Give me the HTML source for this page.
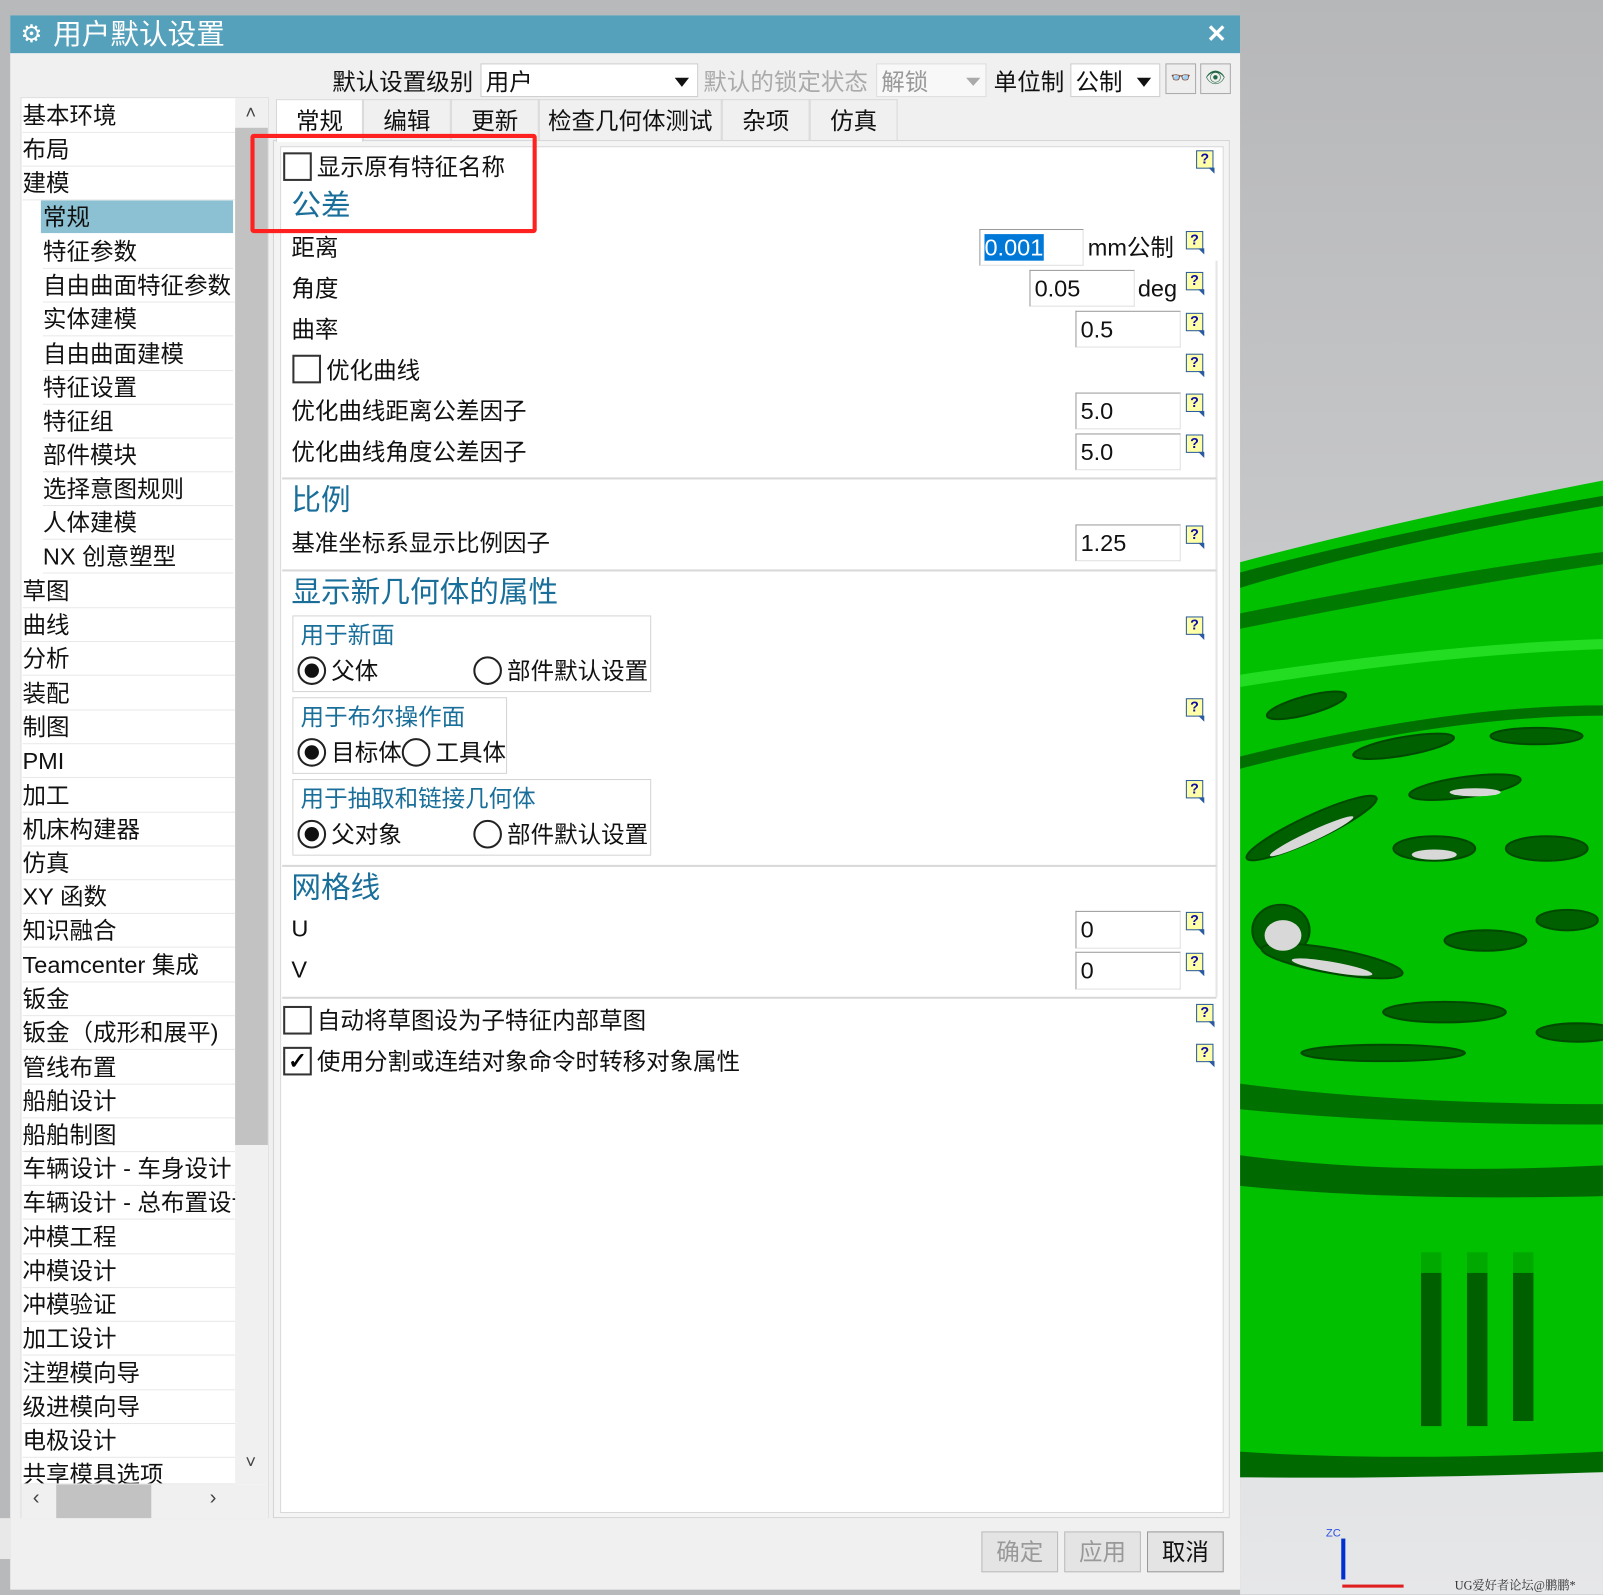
<!DOCTYPE html>
<html><head><meta charset="utf-8">
<style>
*{margin:0;padding:0;box-sizing:border-box}
body{width:1603px;height:1595px;overflow:hidden;background:#b8b9bb;font-family:"Liberation Sans","Noto Sans CJK SC",sans-serif;}
#w{position:absolute;left:0;top:0;width:1568px;height:1560px;transform:scale(1.0223);transform-origin:0 0;}
.a{position:absolute;white-space:nowrap}
.t{font-size:23px;color:#111;line-height:30px}
.b{color:#1a6f9a}
.inp{position:absolute;background:#fff;border:1px solid #9a9a9a;border-right-color:#e0e0e0;border-bottom-color:#e0e0e0;font-size:23px;line-height:34px;padding-left:4px;color:#111}
.cb{position:absolute;width:28px;height:28px;border:2px solid #333;background:#fff}
.rd{position:absolute;width:28px;height:28px;border:2px solid #222;border-radius:50%;background:#fff}
.rd.on::after{content:"";position:absolute;left:5px;top:5px;width:14px;height:14px;border-radius:50%;background:#111}
.h{position:absolute;width:17px;height:18px;background:#ffffa8;border:1.5px solid #2a5aa0;font:bold 14px/15px "Liberation Sans",sans-serif;color:#1010a0;text-align:center}
.h::after{content:"";position:absolute;right:-2px;bottom:-6px;border-left:6px solid transparent;border-top:6px solid #2a5aa0}
.li{position:absolute;left:22px;font-size:23px;line-height:32px;color:#111;border-bottom:1px solid #e8e8e8;width:208px;white-space:nowrap;overflow:hidden}
.sep{position:absolute;left:276px;width:914px;height:2px;background:#d8d8d8}
.grp{position:absolute;border:1px solid #d4d4d4}
.tab{position:absolute;top:97px;height:40px;background:#f0f0f0;border:1px solid #d8d8d8;border-bottom:none;font-size:23px;line-height:40px;text-align:center;color:#111}
.btn{position:absolute;top:1498px;width:75px;height:40px;border:1px solid #bbb;background:#e4e4e4;font-size:23px;line-height:38px;text-align:center;color:#999}
</style></head><body><div id="w">
<svg class="a" style="left:1213px;top:0" width="355" height="1560">
<defs><linearGradient id="bg" x1="0" y1="0" x2="0" y2="1"><stop offset="0" stop-color="#b6b7b9"/><stop offset="1" stop-color="#e6e7e9"/></linearGradient></defs>
<rect width="355" height="1560" fill="url(#bg)"/>
<path d="M0 550 Q150 510 355 470 L355 1440 Q150 1440 0 1445 Z" fill="#00c000"/>
<path d="M0 560 Q150 520 355 485 L355 495 Q150 530 0 575Z" fill="#006e00"/>
<path d="M0 600 Q200 560 355 540 L355 552 Q200 575 0 615Z" fill="#007a00"/>
<path d="M0 660 Q200 630 355 625 L355 635 Q200 640 0 672Z" fill="#22dd22"/>
<path d="M0 740 Q200 690 355 690 L355 700 Q200 700 0 752Z" fill="#007000"/>
<path d="M0 1420 Q150 1430 355 1420 L355 1440 Q150 1447 0 1445Z" fill="#006a00"/>
<path d="M0 1130 Q150 1150 355 1140 L355 1170 Q150 1175 0 1160Z" fill="#006a00"/>
<path d="M0 1060 Q150 1080 355 1080 L355 1100 Q150 1100 0 1085Z" fill="#007000"/>
<g fill="#006000" stroke="#004a00" stroke-width="2">
<ellipse cx="65" cy="690" rx="40" ry="9" transform="rotate(-15 65 690)"/>
<ellipse cx="70" cy="810" rx="70" ry="12" transform="rotate(-25 70 810)"/>
<ellipse cx="160" cy="730" rx="50" ry="9" transform="rotate(-10 160 730)"/>
<ellipse cx="220" cy="770" rx="55" ry="10" transform="rotate(-8 220 770)"/>
<ellipse cx="290" cy="720" rx="45" ry="8"/>
<ellipse cx="40" cy="910" rx="28" ry="25"/>
<ellipse cx="190" cy="830" rx="40" ry="12"/>
<ellipse cx="300" cy="830" rx="40" ry="12"/>
<ellipse cx="90" cy="940" rx="70" ry="12" transform="rotate(10 90 940)"/>
<ellipse cx="240" cy="920" rx="40" ry="10"/>
<ellipse cx="200" cy="990" rx="60" ry="10"/>
<ellipse cx="320" cy="900" rx="30" ry="10"/>
<ellipse cx="140" cy="1030" rx="80" ry="8"/>
<ellipse cx="330" cy="1010" rx="40" ry="9"/>
</g>
<g fill="#d8d8d8">
<ellipse cx="70" cy="818" rx="45" ry="5" transform="rotate(-25 70 818)"/>
<ellipse cx="42" cy="915" rx="18" ry="15"/>
<ellipse cx="190" cy="836" rx="22" ry="5"/>
<ellipse cx="90" cy="946" rx="40" ry="5" transform="rotate(10 90 946)"/>
<ellipse cx="230" cy="775" rx="25" ry="4"/>
</g>
<g fill="#006000"><rect x="177" y="1245" width="20" height="150"/><rect x="222" y="1245" width="20" height="150"/><rect x="267" y="1245" width="20" height="145"/></g>
<g fill="#00a800"><rect x="177" y="1225" width="20" height="20"/><rect x="222" y="1225" width="20" height="20"/><rect x="267" y="1225" width="20" height="20"/></g>
<text x="210" y="1555" font-size="12" fill="#333" font-family="Liberation Serif,Noto Serif CJK SC,serif">UG爱好者论坛@鹏鹏*</text>
<text x="84" y="1503" font-size="11" fill="#3050e0" font-family="Liberation Sans,sans-serif">ZC</text>
<rect x="99" y="1505" width="4" height="40" fill="#0030d0"/><rect x="100" y="1550" width="60" height="3" fill="#e02020"/>
</svg>
<div class="a" style="left:10px;top:15px;width:1203px;height:1540px;background:#f0f0f0"></div>
<div class="a" style="left:10px;top:15px;width:1203px;height:37px;background:#55a0ba"></div>
<div class="a" style="left:20px;top:17px;font-size:24px;color:#fff;line-height:34px">⚙</div>
<div class="a" style="left:52px;top:15px;font-size:28px;color:#fff;line-height:38px">用户默认设置</div>
<div class="a" style="left:1180px;top:17px;font:bold 24px/34px 'Liberation Sans',sans-serif;color:#fff">✕</div>
<div class="a t" style="left:325px;top:65px">默认设置级别</div>
<div class="a" style="left:470px;top:62px;width:213px;height:33px;background:#fff;border:1px solid #ccc"></div>
<div class="a t" style="left:475px;top:65px">用户</div><div class="a" style="left:660px;top:76px;border:7px solid transparent;border-top:9px solid #111"></div>
<div class="a t" style="left:688px;top:65px;color:#aaa">默认的锁定状态</div>
<div class="a" style="left:857px;top:62px;width:108px;height:33px;background:#f8f8f8;border:1px solid #ddd"></div>
<div class="a t" style="left:862px;top:65px;color:#999">解锁</div><div class="a" style="left:945px;top:76px;border:7px solid transparent;border-top:8px solid #aaa"></div>
<div class="a t" style="left:972px;top:65px">单位制</div>
<div class="a" style="left:1047px;top:62px;width:88px;height:33px;background:#fff;border:1px solid #ccc"></div>
<div class="a t" style="left:1052px;top:65px">公制</div><div class="a" style="left:1112px;top:76px;border:7px solid transparent;border-top:9px solid #111"></div>
<div class="a" style="left:1140px;top:62px;width:30px;height:30px;border:1px solid #aaa;background:#eee;font-size:16px;text-align:center;line-height:28px">👓</div>
<div class="a" style="left:1174px;top:62px;width:30px;height:30px;border:1px solid #aaa;background:#eee;font-size:16px;text-align:center;line-height:28px;color:#264">👁</div>
<div class="a" style="left:20px;top:95px;width:243px;height:1390px;background:#fff;border:1px solid #ddd"></div>
<div class="a" style="left:230px;top:96px;width:32px;height:1356px;background:#f0f0f0"></div>
<div class="a" style="left:230px;top:125px;width:32px;height:995px;background:#c2c2c2"></div>
<div class="a" style="left:240px;top:100px;font-size:18px;color:#444">˄</div>
<div class="a" style="left:240px;top:1420px;font-size:18px;color:#444">˅</div>
<div class="a" style="left:21px;top:1452px;width:241px;height:33px;background:#f0f0f0"></div>
<div class="a" style="left:55px;top:1452px;width:93px;height:33px;background:#c2c2c2"></div>
<div class="a" style="left:32px;top:1454px;font-size:20px;color:#444">‹</div><div class="a" style="left:205px;top:1454px;font-size:20px;color:#444">›</div>
<div class="a" style="left:40px;top:196px;width:188px;height:32px;background:#8bc1d2"></div>
<div class="li" style="top:97px">基本环境</div>
<div class="li" style="top:130px">布局</div>
<div class="li" style="top:163px">建模</div>
<div class="li" style="top:196px;left:42px;width:186px;border:none">常规</div>
<div class="li" style="top:230px;left:42px;width:186px">特征参数</div>
<div class="li" style="top:263px;left:42px;width:188px">自由曲面特征参数</div>
<div class="li" style="top:296px;left:42px;width:186px">实体建模</div>
<div class="li" style="top:330px;left:42px;width:186px">自由曲面建模</div>
<div class="li" style="top:363px;left:42px;width:186px">特征设置</div>
<div class="li" style="top:396px;left:42px;width:186px">特征组</div>
<div class="li" style="top:429px;left:42px;width:186px">部件模块</div>
<div class="li" style="top:462px;left:42px;width:186px">选择意图规则</div>
<div class="li" style="top:495px;left:42px;width:186px">人体建模</div>
<div class="li" style="top:528px;left:42px;width:186px">NX 创意塑型</div>
<div class="li" style="top:562px">草图</div>
<div class="li" style="top:595px">曲线</div>
<div class="li" style="top:628px">分析</div>
<div class="li" style="top:662px">装配</div>
<div class="li" style="top:695px">制图</div>
<div class="li" style="top:728px">PMI</div>
<div class="li" style="top:762px">加工</div>
<div class="li" style="top:795px">机床构建器</div>
<div class="li" style="top:828px">仿真</div>
<div class="li" style="top:861px">XY 函数</div>
<div class="li" style="top:894px">知识融合</div>
<div class="li" style="top:928px">Teamcenter 集成</div>
<div class="li" style="top:961px">钣金</div>
<div class="li" style="top:994px">钣金（成形和展平)</div>
<div class="li" style="top:1028px">管线布置</div>
<div class="li" style="top:1061px">船舶设计</div>
<div class="li" style="top:1094px">船舶制图</div>
<div class="li" style="top:1127px">车辆设计 - 车身设计</div>
<div class="li" style="top:1160px">车辆设计 - 总布置设计</div>
<div class="li" style="top:1194px">冲模工程</div>
<div class="li" style="top:1227px">冲模设计</div>
<div class="li" style="top:1260px">冲模验证</div>
<div class="li" style="top:1293px">加工设计</div>
<div class="li" style="top:1327px">注塑模向导</div>
<div class="li" style="top:1360px">级进模向导</div>
<div class="li" style="top:1393px">电极设计</div>
<div class="li" style="top:1426px;height:26px">共享模具选项</div>
<div class="a" style="left:267px;top:137px;width:936px;height:1348px;background:#f4f4f4;border:1px solid #d4d4d4"></div>
<div class="a" style="left:274px;top:143px;width:923px;height:1337px;background:#fff;border:1px solid #d8d8d8"></div>
<div class="tab" style="left:270px;width:85px;background:#fff;height:42px">常规</div>
<div class="tab" style="left:355px;width:86px">编辑</div>
<div class="tab" style="left:441px;width:86px">更新</div>
<div class="tab" style="left:527px;width:179px">检查几何体测试</div>
<div class="tab" style="left:706px;width:86px">杂项</div>
<div class="tab" style="left:792px;width:86px">仿真</div>
<div class="a" style="left:1189px;top:255px;width:2px;height:720px;background:#e6e6e6"></div>
<div class="cb" style="left:277px;top:149px"></div><div class="a t" style="left:310px;top:148px">显示原有特征名称</div>
<div class="a b" style="left:285px;top:183px;font-size:29px;line-height:38px">公差</div>
<div class="a t" style="left:285px;top:227px">距离</div>
<div class="inp" style="left:958px;top:224px;width:102px;height:36px"><span style="background:#0078d7;color:#fff">0.001</span></div>
<div class="a t" style="left:1064px;top:227px">mm公制</div>
<div class="a t" style="left:285px;top:267px">角度</div>
<div class="inp" style="left:1007px;top:264px;width:103px;height:36px">0.05</div><div class="a t" style="left:1113px;top:267px">deg</div>
<div class="a t" style="left:285px;top:307px">曲率</div><div class="inp" style="left:1052px;top:304px;width:103px;height:36px">0.5</div>
<div class="cb" style="left:286px;top:347px"></div><div class="a t" style="left:319px;top:347px">优化曲线</div>
<div class="a t" style="left:285px;top:387px">优化曲线距离公差因子</div><div class="inp" style="left:1052px;top:384px;width:103px;height:36px">5.0</div>
<div class="a t" style="left:285px;top:427px">优化曲线角度公差因子</div><div class="inp" style="left:1052px;top:424px;width:103px;height:36px">5.0</div>
<div class="sep" style="top:467px"></div>
<div class="a b" style="left:285px;top:471px;font-size:29px;line-height:38px">比例</div>
<div class="a t" style="left:285px;top:516px">基准坐标系显示比例因子</div><div class="inp" style="left:1052px;top:513px;width:103px;height:36px">1.25</div>
<div class="sep" style="top:557px"></div>
<div class="a b" style="left:285px;top:561px;font-size:29px;line-height:38px">显示新几何体的属性</div>
<div class="grp" style="left:286px;top:602px;width:351px;height:75px"></div>
<div class="a b" style="left:294px;top:606px;font-size:23px;line-height:30px">用于新面</div>
<div class="rd on" style="left:291px;top:642px"></div><div class="a t" style="left:324px;top:641px">父体</div>
<div class="rd" style="left:463px;top:642px"></div><div class="a t" style="left:496px;top:641px">部件默认设置</div>
<div class="grp" style="left:286px;top:682px;width:210px;height:75px"></div>
<div class="a b" style="left:294px;top:686px;font-size:23px;line-height:30px">用于布尔操作面</div>
<div class="rd on" style="left:291px;top:722px"></div><div class="a t" style="left:324px;top:721px">目标体</div>
<div class="rd" style="left:393px;top:722px"></div><div class="a t" style="left:426px;top:721px">工具体</div>
<div class="grp" style="left:286px;top:762px;width:351px;height:75px"></div>
<div class="a b" style="left:294px;top:766px;font-size:23px;line-height:30px">用于抽取和链接几何体</div>
<div class="rd on" style="left:291px;top:802px"></div><div class="a t" style="left:324px;top:801px">父对象</div>
<div class="rd" style="left:463px;top:802px"></div><div class="a t" style="left:496px;top:801px">部件默认设置</div>
<div class="sep" style="top:846px"></div>
<div class="a b" style="left:285px;top:850px;font-size:29px;line-height:38px">网格线</div>
<div class="a t" style="left:285px;top:893px">U</div><div class="inp" style="left:1052px;top:891px;width:103px;height:37px">0</div>
<div class="a t" style="left:285px;top:933px">V</div><div class="inp" style="left:1052px;top:931px;width:103px;height:37px">0</div>
<div class="sep" style="top:975px"></div>
<div class="cb" style="left:277px;top:984px"></div><div class="a t" style="left:310px;top:983px">自动将草图设为子特征内部草图</div>
<div class="cb" style="left:277px;top:1024px;font:bold 22px/24px sans-serif;text-align:center">✓</div><div class="a t" style="left:310px;top:1023px">使用分割或连结对象命令时转移对象属性</div>
<div class="h" style="left:1170px;top:147px">?</div>
<div class="h" style="left:1160px;top:226px">?</div>
<div class="h" style="left:1160px;top:266px">?</div>
<div class="h" style="left:1160px;top:306px">?</div>
<div class="h" style="left:1160px;top:346px">?</div>
<div class="h" style="left:1160px;top:385px">?</div>
<div class="h" style="left:1160px;top:425px">?</div>
<div class="h" style="left:1160px;top:514px">?</div>
<div class="h" style="left:1160px;top:603px">?</div>
<div class="h" style="left:1160px;top:683px">?</div>
<div class="h" style="left:1160px;top:763px">?</div>
<div class="h" style="left:1160px;top:892px">?</div>
<div class="h" style="left:1160px;top:932px">?</div>
<div class="h" style="left:1170px;top:982px">?</div>
<div class="h" style="left:1170px;top:1021px">?</div>
<div class="a" style="left:245px;top:131px;width:280px;height:97px;border:4px solid #ff2020;border-radius:3px"></div>
<div class="btn" style="left:960px">确定</div>
<div class="btn" style="left:1041px">应用</div>
<div class="btn" style="left:1122px;color:#111;border-color:#999">取消</div>
<div class="a" style="left:0;top:1485px;width:10px;height:40px;background:#e8e8e8"></div>
</div></body></html>
